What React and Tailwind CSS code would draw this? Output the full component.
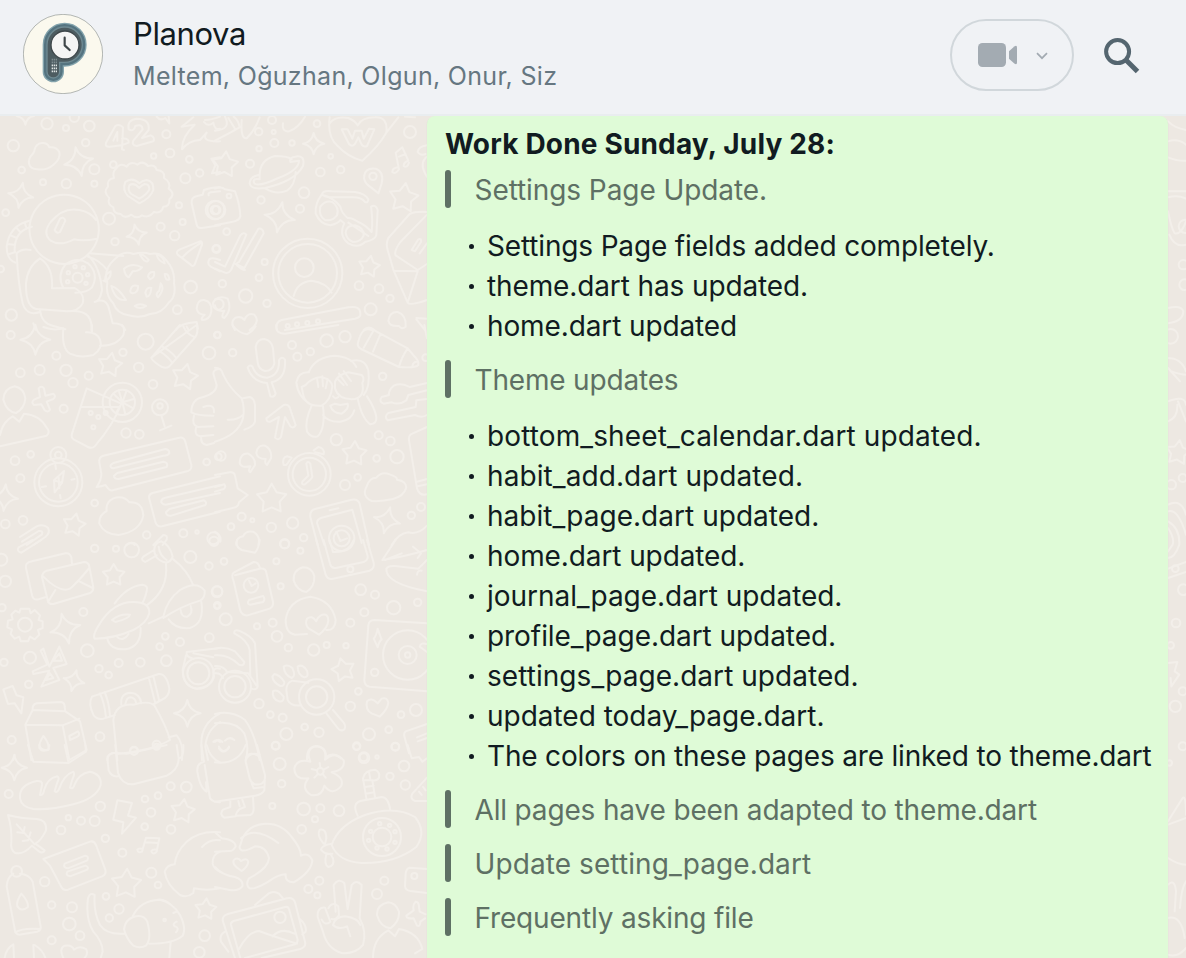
import React from "react";

/* ---------- Wallpaper doodles ----------
   Each tile is drawn in a 660-unit grid placed at (x, y) and scaled by 1/3.
   dots: [cx, cy, r]   stars: [cx, cy, r, rotation]   sparks: [cx, cy, r, rotation] */
const TILES = [
  {
    x: 0,
    y: 110,
    dots: [
      [141, 41, 17], [198, 54, 9], [268, 48, 16], [40, 107, 17], [257, 98, 11], [65, 180, 10], [129, 217, 9],
      [199, 221, 14], [283, 221, 9], [283, 178, 15], [340, 164, 10], [499, 73, 12], [510, 129, 13], [461, 138, 8],
      [568, 148, 10], [556, 205, 15], [599, 189, 11], [537, 286, 9], [548, 336, 9], [482, 350, 12], [524, 377, 14],
      [327, 326, 18], [345, 395, 11], [17, 308, 10], [572, 531, 19], [532, 599, 13], [34, 615, 17], [649, 416, 10],
      [2, 477, 10], [233, 503, 15], [205, 488, 5], [225, 470, 5], [250, 473, 5], [263, 494, 5], [258, 520, 5],
      [203, 515, 5], [645, 300, 28], [645, 300, 13], [223, 22, 14], [655, 583, 16],
    ],
    sparks: [[236, 155, 44, -12], [62, 256, 38, 10], [410, 374, 31, -12], [76, 18, 26, 0]],
    paths: [
      "M98 132C80 150 82 176 112 178C150 184 184 150 178 126C168 108 152 112 148 112C140 92 110 96 104 118Q104 126 98 132Z",
      "M372 120L366 118L369 52Q358 40 346 48L318 98Q314 112 330 110L364 106M340 92L352 66L352 92M364 106L386 98Q388 84 366 86",
      "M386 58Q380 30 410 26Q450 26 446 60L426 84L452 76Q466 82 460 94L410 108Q394 106 400 92L428 58Q426 40 406 48Q402 66 386 58Z",
      "M470 20Q480 34 496 24L508 40L506 18M580 22L545 50Q570 46 584 44Q545 80 546 118Q566 92 600 90L620 68Q600 96 660 94M615 30Q634 30 660 20M612 36Q624 52 640 38Q644 62 660 56M660 142L634 146L646 166L636 190L660 186",
      "M348 176Q362 156 380 170Q392 152 412 164Q428 150 444 168Q466 162 470 180Q496 182 492 204Q514 218 506 236Q528 252 508 268Q510 290 490 290Q484 312 462 306Q446 326 426 316Q410 328 394 314Q374 328 362 312Q340 312 340 292Q320 284 328 264Q308 246 324 230Q320 206 342 204Q336 186 348 176Z",
      "M418 220Q396 200 376 216Q366 240 384 258L418 280Q452 264 460 240Q462 214 440 210Q426 212 418 220Z",
      "M418 234Q402 216 388 226Q382 242 394 252L418 266Q442 252 448 238Q448 222 434 222Q424 226 418 234Z",
      "M192 254A104 104 0 1 0 193 254M292 386Q250 394 222 388Q180 410 152 392Q126 370 152 336Q190 290 238 300Q272 306 288 330M164 360L180 326Q192 318 196 332L180 366Q170 372 164 360Z",
      "M88 332Q28 346 20 410Q20 448 46 458M96 350Q42 362 44 424M74 338L80 356M50 354L62 368M32 376L50 384M22 402L42 404M28 432L46 426",
      "M50 430Q66 414 92 420M50 430Q54 520 68 580Q80 620 120 606M120 445Q160 470 156 535L224 534Q256 552 248 580Q236 604 200 604L120 598Q76 600 78 520Q82 470 120 445M120 600Q124 640 160 648L196 658M200 604Q280 594 274 660M264 436Q300 470 306 540Q300 574 284 576Q320 560 328 600L338 640Q370 640 376 660M268 430L370 438M264 440Q294 446 322 480M100 640L108 660",
      "M190 534Q170 496 196 464Q230 438 264 460Q298 492 276 532Q262 548 226 548M310 512L322 516",
      "M344 448Q370 420 400 432Q430 424 450 432Q482 426 498 450Q526 480 522 520Q530 560 506 578Q486 610 450 612Q420 626 386 616Q350 610 340 580Q316 556 322 520Q308 480 344 448Z",
      "M372 476Q396 456 426 472Q416 484 398 484L386 502Q374 496 372 476ZM334 528Q356 534 378 570Q346 574 334 528ZM404 588Q420 578 438 588Q420 600 404 588ZM482 520Q496 536 474 562Q464 552 478 542ZM420 434Q430 432 446 450Q438 464 420 434ZM470 432Q492 440 494 460Q472 452 470 432ZM332 484Q334 504 316 514Q312 492 332 484ZM392 538Q396 522 414 528Q416 548 398 550Q388 548 392 538ZM436 548Q440 530 454 534Q452 560 440 560ZM444 500Q446 484 462 486Q466 502 450 508ZM494 492Q506 490 508 508Q496 514 494 492Z",
      "M575 280Q572 262 592 258L608 254L612 240Q640 230 660 232M575 280L590 344Q592 356 606 354L660 346M626 256Q622 246 640 246L660 244",
      "M533 434Q526 424 540 418L600 394Q608 394 606 404L584 464Q578 472 572 464ZM546 444Q562 424 604 398M660 450Q636 440 628 448Q620 462 632 470L660 484",
      "M590 596Q592 568 612 570Q638 576 634 604Q630 630 606 630Q602 624 614 614Q594 614 590 596ZM528 660Q540 640 590 636L594 656M560 650L566 660",
    ],
  },
  {
    x: 215,
    y: 110,
    dots: [
      [171, 30, 12], [131, 65, 11], [176, 66, 6], [178, 99, 12], [231, 99, 8], [132, 116, 8], [306, 41, 10],
      [105, 161, 12], [316, 186, 13], [377, 179, 11], [347, 139, 7], [585, 66, 18], [267, 248, 16], [138, 270, 11],
      [255, 296, 12], [474, 199, 11], [35, 365, 10], [149, 456, 9], [132, 503, 10], [22, 521, 11], [92, 558, 20],
      [156, 580, 11], [268, 473, 28], [432, 527, 13], [492, 536, 13], [525, 565, 11], [467, 598, 18], [4, 417, 12],
      [4, 300, 27], [4, 300, 12], [42, 258, 7], [278, 490, 104], [278, 490, 88], [218, 648, 6], [246, 643, 6],
      [277, 639, 6], [309, 634, 6],
    ],
    stars: [[30, 164, 40, 5], [566, 264, 45, 8], [462, 470, 33, 10]],
    sparks: [[296, 101, 32, 0], [194, 322, 46, 10]],
    paths: [
      "M0 92Q60 60 74 52Q70 30 56 20M0 62Q50 58 30 20M40 24L60 56M80 30Q76 90 96 84Q120 60 134 22M204 40Q200 66 222 64Q250 54 270 20",
      "M344 22Q336 80 368 108Q400 142 442 152Q490 110 514 68L550 22M344 40Q360 18 400 24Q420 32 428 46Q440 22 480 22Q520 20 514 68",
      "M380 58L398 58L412 86L420 62L440 62L446 86L462 56L478 58L456 108Q446 112 440 104L430 82L420 102Q412 112 402 102Z",
      "M134 200Q132 150 180 138Q220 138 230 148M152 236Q184 256 216 242Q240 226 242 186M134 194Q104 200 104 220Q108 240 150 234Q240 214 264 168Q272 134 240 140Q222 142 226 156L252 152Q252 180 190 204Q130 232 118 220Q110 204 134 208Z",
      "M320 254Q324 240 350 244L420 246Q450 250 460 268Q460 280 450 276Q440 262 414 262L342 262Q330 260 320 254M320 254Q300 280 302 310Q314 342 346 346Q370 340 376 330Q386 338 388 340Q370 376 400 400Q430 416 450 396Q480 390 484 376L488 300Q482 282 468 290Q474 330 470 366Q450 344 430 336Q410 322 398 324Q380 310 376 290Q356 262 320 254Z",
      "M316 290Q330 270 352 276Q374 292 366 316Q352 334 330 330Q310 318 316 290ZM392 368Q394 346 420 346Q448 354 446 376Q438 396 414 396Q394 388 392 368ZM400 338L460 378",
      "M448 196Q452 172 482 176Q508 186 500 220L490 250Q476 238 460 226Q444 214 448 196Z",
      "M552 178L542 128L562 112L580 152M552 140L572 132M552 178Q542 194 532 186Q532 174 548 172M582 158Q576 176 566 168Q566 156 580 152",
      "M636 106Q610 110 608 126Q616 138 632 132M636 140Q610 160 636 200M570 20L600 22",
      "M0 236Q20 228 30 238L60 244Q74 280 76 318Q74 332 50 336L0 346",
      "M0 456L30 470L76 376Q86 364 94 374L48 480Q40 492 30 488L0 476M62 462L88 474L146 370Q144 354 130 356L72 456ZM66 466Q80 480 90 480",
      "M636 306Q600 304 584 312L520 384Q512 400 518 420L536 482L578 578Q584 588 636 570M636 314L556 396Q536 424 542 436L608 480L636 462M536 482L608 484L578 578M590 420L610 388Q620 384 618 396L600 424ZM614 430L636 400",
      "M236 558Q246 516 290 512Q334 518 350 548M186 660Q180 636 200 630L400 592Q436 586 436 610Q438 622 420 626L210 660",
      "M0 568Q20 556 38 566Q52 600 28 624Q16 622 28 602Q4 606 0 586M60 660Q44 636 60 624Q78 616 88 630Q98 606 118 614Q134 632 116 650L104 660",
      "M520 632Q524 604 548 606Q574 614 572 650Q560 660 552 648Q524 650 520 632ZM446 660Q462 646 478 660M604 624L636 626M604 628L630 660",
    ],
  },
  {
    x: 0,
    y: 325,
    dots: [
      [32, 30, 12], [169, 92, 12], [119, 135, 15], [61, 143, 13], [198, 136, 17], [219, 173, 14], [266, 152, 12],
      [369, 82, 11], [416, 127, 14], [437, 50, 24], [459, 178, 13], [627, 84, 19], [191, 251, 12], [272, 264, 6],
      [295, 276, 6], [317, 264, 6], [280, 307, 6], [378, 324, 14], [418, 328, 13], [480, 247, 24], [480, 243, 8],
      [45, 407, 13], [92, 388, 10], [61, 460, 12], [175, 390, 24], [175, 390, 10], [175, 472, 72], [175, 472, 58],
      [284, 534, 10], [16, 597, 13], [69, 586, 13], [440, 630, 11], [550, 625, 12], [620, 411, 10], [591, 621, 5],
      [640, 640, 18], [367, 232, 59], [367, 232, 38], [652, 30, 9], [655, 395, 10],
    ],
    stars: [[330, 120, 37, 10], [554, 156, 40, 12], [222, 600, 35, 12]],
    sparks: [[106, 44, 45, 0], [14, 518, 40, 5]],
    paths: [
      "M130 6Q160 18 190 10Q184 70 210 86Q240 100 280 90Q310 70 300 44Q290 20 258 22M300 62Q350 64 370 30Q376 10 366 0M276 0L276 20",
      "M454 98L540 0M590 0Q596 20 586 36L508 124Q494 134 476 120Q454 104 454 98ZM474 76Q500 90 516 112M486 64Q510 76 528 98M550 4Q560 28 584 36",
      "M44 184Q12 190 10 224Q20 260 48 264Q74 250 76 220Q72 190 44 184ZM0 364L140 332Q152 320 140 308Q120 270 72 266L58 290L38 274Q8 290 0 330",
      "M116 190Q124 180 132 190L136 212L160 206Q170 214 160 222L140 230L150 254Q144 264 134 256L124 238L102 240Q92 232 102 224L120 216Z",
      "M260 190L364 236Q340 300 284 364Q276 372 264 366L222 344Q212 338 216 326ZM242 246L356 246M367 232L340 206M367 232L356 196M367 232L380 196M367 232L402 222M367 232L400 250M367 232L376 268M367 232L348 264",
      "M484 272L494 304M480 316L514 302",
      "M660 132Q640 132 640 146L650 180Q650 204 610 216Q574 222 574 262Q590 272 640 272M610 246Q644 234 642 262M582 272Q574 300 594 306L640 304M588 308Q582 330 600 334L640 330M604 334Q600 356 620 360L642 354",
      "M162 466L192 438L186 474L164 502ZM164 466L186 474M176 458L178 490M166 420L168 432M182 520L180 510M126 486L138 484M224 462L214 464",
      "M310 392L538 338Q552 336 556 350L574 420Q576 434 564 438L344 494Q330 500 324 490L316 480Q304 484 290 486Q304 466 304 446L298 412Q296 396 310 392Z",
      "M340 414L496 372Q508 374 508 384Q504 392 490 392L340 430Q330 430 332 420ZM352 444L490 410Q506 412 500 426L356 462Q342 462 342 452Z",
      "M660 454L458 504Q444 508 448 522L466 590Q470 606 486 604L660 560M660 480L496 518Q482 522 484 532Q490 542 504 538L660 504M508 552L612 526Q622 532 616 540L514 572Q498 574 498 562Z",
      "M320 558Q296 570 298 596Q312 628 356 630Q420 620 430 572Q428 530 388 532Q370 510 340 520Q316 532 320 558Z",
      "M60 636L110 604Q130 596 144 608Q152 624 136 636L100 660M66 650L116 618Q130 616 126 628L80 660M460 660L490 630Q504 630 500 644L488 660M380 660Q394 650 404 660",
    ],
  },
  {
    x: 215,
    y: 325,
    dots: [
      [7, 30, 10], [53, 83, 11], [231, 60, 12], [247, 95, 12], [286, 80, 11], [335, 47, 19], [390, 35, 17],
      [503, 154, 11], [364, 344, 17], [18, 393, 14], [491, 331, 12], [526, 348, 13], [546, 395, 20], [485, 400, 10],
      [428, 457, 10], [390, 480, 15], [80, 575, 12], [112, 586, 6], [48, 605, 10], [169, 607, 14], [233, 594, 17],
      [266, 638, 11], [209, 656, 14], [589, 571, 11], [618, 546, 12], [283, 448, 64], [283, 448, 50], [380, 640, 38],
      [380, 640, 24], [632, 98, 10],
    ],
    stars: [[418, 386, 38, 3], [170, 522, 46, 0]],
    sparks: [[516, 586, 40, 14]],
    paths: [
      "M122 66Q126 42 148 42Q170 46 174 70L178 116Q172 138 150 138Q130 132 128 112ZM98 128Q102 118 112 124Q124 158 156 158Q194 152 192 106Q200 92 210 104Q214 162 170 172L182 206Q178 218 166 214L156 174Q112 170 98 128Z",
      "M0 128Q20 128 24 148Q44 190 80 220Q90 250 84 280Q70 330 0 350M84 220L104 216Q118 220 120 240L120 290Q114 306 88 314M84 270Q66 286 38 284",
      "M154 280L206 240Q220 236 224 248L242 300Q236 312 226 304L210 276L198 336Q190 348 180 338L192 276L166 290Q154 292 154 280Z",
      "M282 140Q300 96 360 92Q410 96 424 126M282 142Q250 140 244 172Q248 216 290 240M408 108Q450 98 460 136Q466 186 446 210M260 186L272 180Q290 158 320 156Q350 164 352 184Q348 226 320 242Q270 246 264 206ZM360 170Q370 148 400 142L440 150Q450 160 442 174Q450 214 420 222Q370 226 360 190ZM306 160L310 186M322 154L324 184M338 162L332 190M372 146L396 180M386 138L408 168M366 160L386 180",
      "M290 242Q268 290 276 320Q290 340 308 334Q332 310 324 244M428 220Q440 280 466 298Q486 296 484 276Q480 250 456 214M324 270Q340 292 376 290Q410 286 418 256M346 242L360 236L376 240L398 236Q404 250 380 266Q352 264 346 242ZM354 214Q360 224 370 216",
      "M466 14Q440 6 430 50Q424 64 438 72L552 126Q600 130 610 120Q612 108 600 96L578 70L478 16ZM476 16L446 68M496 28L474 80M578 70Q560 96 552 126M592 124Q594 110 606 110",
      "M636 174L584 186Q560 172 536 182Q520 196 522 210L500 216Q490 230 506 236L530 232Q552 242 574 226L580 210L636 196M636 222L604 226L602 246L520 264Q506 274 518 286L600 270Q620 280 636 270M636 306L592 326Q580 330 582 346L606 490Q614 514 636 508M606 470L636 462M608 484L636 478M628 0L636 40",
      "M74 412Q76 384 100 386Q122 400 120 420L106 442Q98 440 106 424Q76 430 74 412ZM124 384Q128 358 150 362Q172 374 168 400L156 420Q148 416 152 402Q126 402 124 384Z",
      "M274 416Q278 406 286 416L292 456Q290 462 270 478Q258 480 262 470L280 452ZM206 420Q200 398 216 394L230 398L214 420ZM296 376L310 366Q330 370 326 388L300 382",
      "M0 450L44 442Q58 440 60 452L68 490L98 510L72 532Q70 546 56 548L0 562M0 486L28 478Q34 486 26 492L0 500",
      "M456 482Q464 458 484 458Q500 438 524 448Q548 456 546 464Q574 468 574 488Q566 514 534 522Q500 530 470 528Q438 514 456 482Z",
      "M308 660L286 576Q284 556 300 552L410 524Q428 520 434 536L462 660M328 660L306 594Q306 582 320 578L412 554L440 654M344 556L370 550M364 620L376 648L396 640M530 660Q550 626 580 622Q610 630 636 602M64 660Q62 638 84 634Q92 616 114 620Q138 634 130 660",
      "M0 620Q20 630 16 650M52 0Q70 24 96 28Q112 20 122 4M184 0Q180 26 210 26L370 0",
    ],
  },
  {
    x: 0,
    y: 540,
    dots: [
      [284, 25, 11], [348, 26, 9], [395, 30, 22], [4, 59, 18], [16, 124, 17], [6, 203, 11], [75, 254, 21],
      [250, 216, 12], [262, 332, 19], [90, 353, 18], [12, 367, 11], [86, 433, 11], [297, 386, 11], [326, 405, 10],
      [356, 369, 12], [421, 367, 13], [499, 362, 16], [496, 289, 10], [479, 320, 10], [540, 306, 12], [571, 51, 18],
      [627, 78, 11], [628, 293, 13], [595, 400, 46], [595, 400, 33], [35, 600, 12], [300, 590, 13], [402, 632, 12],
      [470, 614, 12], [652, 154, 15], [652, 196, 10], [642, 4, 14],
    ],
    stars: [[341, 106, 34, 0]],
    sparks: [[196, 266, 46, -14], [222, 422, 32, 14], [562, 520, 40, 0]],
    paths: [
      "M98 0L56 22Q48 34 64 38L124 0",
      "M96 64L196 40Q210 38 214 52L216 70M96 64Q74 68 78 84L96 166Q100 182 116 178L136 172M140 92L252 66Q266 66 268 80L280 142Q280 156 268 160L160 192Q148 194 144 184L126 112Q126 98 140 92ZM130 110Q180 160 210 146Q230 130 268 84M144 186L166 150M278 144L238 124",
      "M62 206L88 206L92 220L104 210L120 226L116 240L128 244L128 264L114 270L118 284L104 298L90 290L84 304L62 304L58 290L44 296L32 282L36 268L22 262L24 242L38 238L34 224L46 212L58 218Z",
      "M130 326L148 380L178 320L200 372L160 384L178 420L124 440L148 392L100 402L98 394L142 374L122 332ZM160 362L178 340L186 362ZM150 400L160 414L138 420Z",
      "M10 448L38 438L50 466L70 472L64 520L44 490L24 492Z",
      "M98 510Q96 494 110 490L184 486Q194 488 194 500L196 514M98 510L196 514L240 544L260 630L208 660L188 556L76 554M98 510L76 554L94 660M188 556L238 536M130 588Q116 610 118 624Q128 640 146 626Q146 606 130 588ZM208 588L234 574Q242 584 232 590L210 600Z",
      "M284 296Q276 286 300 250Q340 186 400 186Q450 186 448 220Q440 250 400 270Q340 296 284 296ZM344 190Q380 140 426 134Q446 136 440 154Q434 180 426 190M336 240Q360 220 390 224Q388 236 346 246ZM322 296Q330 330 376 328Q424 320 422 264M352 292Q370 306 386 282",
      "M462 30L430 50Q420 60 436 66L470 46M464 40Q458 10 484 4Q510 14 518 50Q510 72 490 66Q470 60 464 40ZM476 20Q478 46 500 60M520 58Q562 90 580 136M498 72Q506 150 440 196M446 250L490 230Q500 180 540 150Q590 120 614 152Q616 174 600 182Q540 200 490 234M506 238Q526 268 570 264Q614 250 604 186M542 210Q544 232 562 230Q580 220 572 198",
      "M276 470L476 402Q500 400 508 446Q508 470 484 480L462 492M276 470Q264 490 280 524Q290 540 310 536L344 526M300 460Q314 490 318 532M314 456Q328 490 330 528M446 412L466 490M460 408L478 484M364 494Q360 460 392 458Q420 460 424 490M376 492Q380 472 392 472Q406 474 408 488",
      "M340 540Q346 490 400 494Q450 480 464 498Q500 560 510 600Q460 630 350 642L340 540M350 642L352 660M322 660Q326 634 350 640M506 592L530 586Q552 610 546 660",
      "M560 336L660 324M560 336Q556 350 580 356M580 340L640 352M558 346L548 390Q550 440 590 446Q636 440 642 410Q634 380 660 386M660 520Q604 550 604 610L606 660M660 546Q620 570 616 620L624 660M640 606Q648 596 660 606M44 644L40 660",
    ],
  },
  {
    x: 215,
    y: 540,
    dots: [
      [209, 12, 13], [256, 32, 9], [27, 64, 10], [184, 64, 9], [197, 139, 9], [6, 155, 16], [32, 238, 18],
      [173, 248, 12], [126, 259, 9], [186, 289, 16], [220, 323, 11], [296, 330, 17], [335, 315, 9], [393, 317, 8],
      [406, 248, 12], [448, 217, 12], [437, 149, 16], [480, 164, 12], [536, 203, 20], [608, 187, 11], [108, 136, 22],
      [406, 88, 9], [430, 454, 10], [406, 499, 14], [479, 397, 11], [578, 345, 74], [578, 345, 27], [578, 345, 8],
      [603, 510, 18], [558, 524, 10], [132, 491, 14], [166, 524, 10], [203, 533, 12], [269, 561, 10], [214, 582, 18],
      [312, 577, 14], [182, 617, 11], [462, 583, 18], [521, 569, 10], [541, 620, 12], [425, 620, 10], [305, 471, 53],
      [305, 471, 32], [60, 440, 48], [60, 440, 32], [446, 652, 12], [6, 198, 8],
    ],
    stars: [[385, 390, 36, -14]],
    paths: [
      "M66 0Q60 20 80 30L120 38Q132 24 134 0",
      "M56 98L116 66Q130 66 134 82M56 98Q48 104 56 124L76 212Q82 228 98 226L164 206Q176 200 174 186L154 98Q152 84 134 86L60 106M102 122L110 138L122 130M102 180L144 168Q152 178 144 186L106 194Q94 192 102 180Z",
      "M264 82Q234 90 236 122Q246 152 274 156Q300 140 298 108Q290 82 264 82ZM276 282L240 284Q212 280 212 240Q220 180 286 170Q350 180 362 240Q360 272 334 270M304 244Q290 224 276 236Q268 254 282 266L312 284Q338 264 340 242Q340 220 322 224Q308 230 304 244Z",
      "M304 0L332 104Q338 120 354 116L464 92Q480 84 476 68L456 0M326 0L346 74Q350 86 362 84L446 66Q460 60 458 48L444 0M344 0L354 36Q400 40 416 0",
      "M542 0L502 60Q560 52 636 30M510 60L560 40M514 86Q520 76 540 78L610 86L636 60M514 86Q510 130 636 154M594 20L618 40L608 54M606 104Q608 90 620 92",
      "M636 250L478 240Q462 240 460 256L448 420Q448 438 464 440L636 454M488 266Q496 290 500 298Q492 304 488 322Q480 304 476 296Q484 288 488 266ZM636 312Q618 306 614 320L636 336",
      "M58 280Q56 268 72 272Q110 288 120 310L128 440Q124 452 110 446M58 280Q98 300 104 330L106 410M0 326Q30 318 60 334L88 366Q86 380 72 374Q40 342 0 346M0 378Q26 376 36 396L100 400L124 436M0 400Q16 398 24 414",
      "M178 402Q196 406 208 426Q208 440 196 438Q174 428 172 410ZM206 380Q218 372 232 384Q244 408 230 414Q208 406 206 380ZM248 380Q262 370 276 392Q282 412 268 412Q248 404 248 380ZM174 454Q186 444 206 470Q208 486 192 484Q170 476 174 454ZM280 428L232 422Q214 428 214 450L218 480Q228 500 258 496",
      "M334 520L368 564Q376 576 388 568Q394 560 386 548L354 510",
      "M488 490Q468 470 456 484Q450 510 470 520L494 530Q518 508 520 488Q516 470 500 476Z",
      "M0 522Q50 510 90 540Q120 580 134 660M0 550Q60 540 88 580Q104 620 92 660M0 606Q10 592 22 606M30 602Q44 588 58 600M12 620Q26 646 42 620M92 660Q104 634 134 644",
      "M276 660Q274 620 304 618Q336 622 332 652Q356 634 378 656M636 552L572 574Q564 580 570 596L582 640M606 592L636 580M608 604L636 594",
    ],
  },
  {
    x: 0,
    y: 745,
    dots: [
      [26, 147, 12], [301, 184, 14], [284, 228, 15], [243, 227, 12], [205, 218, 8], [183, 255, 13], [316, 280, 11],
      [367, 323, 12], [435, 162, 10], [474, 152, 10], [512, 124, 12], [559, 126, 16], [453, 202, 13], [434, 245, 10],
      [513, 253, 13], [134, 410, 14], [155, 480, 11], [216, 487, 15], [318, 454, 10], [357, 492, 14], [328, 519, 11],
      [208, 537, 19], [240, 572, 13], [155, 586, 12], [454, 383, 15], [474, 420, 10], [614, 572, 16], [598, 622, 16],
      [494, 525, 4], [50, 379, 16], [402, 18, 11], [470, 5, 9],
    ],
    stars: [[548, 199, 37, 8], [379, 417, 46, 3], [617, 493, 33, 5]],
    sparks: [[43, 68, 38, 0]],
    paths: [
      "M84 0L100 50L206 54L258 20L256 0M194 0L206 54M118 0Q124 20 146 14L148 0",
      "M346 0L354 84Q366 120 400 118L500 92Q536 74 536 40L530 0M350 22Q322 26 322 40L326 76Q334 96 354 94M346 24L380 26L436 14L500 0M536 40Q552 40 550 0",
      "M60 160Q56 120 110 108Q128 106 126 120L120 150Q130 152 132 136Q142 100 172 94Q180 98 172 112L164 138Q172 146 178 130Q192 90 220 80Q226 86 216 106L210 128Q220 134 224 118Q236 86 270 80Q306 88 302 120Q290 160 220 178Q150 196 100 192Q64 186 60 160Z",
      "M352 166L396 174L384 212L408 218L366 266L370 232L340 224Z",
      "M24 210Q60 220 110 222Q142 226 138 256Q124 286 106 296L134 316Q130 326 118 320L96 302Q70 330 46 324Q30 316 34 290Q36 250 24 210ZM50 238L104 298M52 262L70 264L74 246M68 288L84 286L92 262",
      "M130 342L270 290Q282 286 288 300L316 374Q320 388 306 394L204 434Q190 438 184 426L150 362ZM194 356L256 332Q268 334 262 346L204 370Q188 368 194 356ZM202 380L256 362Q268 366 262 374L210 394Q196 392 202 380Z",
      "M426 320L438 278L478 280L470 320M436 292L474 294M426 320Q414 326 412 314Q416 308 428 312M468 322Q456 330 454 318Q458 312 470 314",
      "M40 386Q22 396 20 424L46 562Q52 572 66 568L112 560Q124 556 122 544L98 410Q88 388 60 386M46 562Q66 548 122 552M64 446Q48 470 52 484Q64 502 84 486Q86 470 64 446Z",
      "M606 306Q630 280 660 286M660 262Q600 256 560 290Q528 320 524 358Q500 360 494 380Q500 420 540 450Q560 460 580 444L582 430Q620 438 660 430M660 320Q636 330 638 356Q640 370 660 380",
      "M284 450Q270 440 264 460Q256 520 280 560Q308 590 308 620L302 639M284 450Q280 500 300 540Q320 570 372 566M372 552Q376 524 400 516Q430 506 442 530Q456 580 438 602Q420 612 400 602Q378 580 372 552ZM398 514Q420 466 480 464Q520 474 540 510Q560 550 548 572Q520 596 448 596M466 466Q490 456 516 482M530 530Q516 536 524 544Q540 548 528 562M520 504L530 500M512 590L508 639",
      "M14 639Q18 610 40 598L42 639M100 600L102 639M104 600Q130 616 136 639M190 639Q176 610 194 602Q216 598 222 614Q238 600 258 612Q266 626 254 639",
      "M604 0L612 50Q590 54 592 80Q600 130 620 140L618 112M614 60L630 160Q640 172 660 172M620 0Q630 40 660 52",
    ],
  },
  {
    x: 215,
    y: 745,
    dots: [
      [182, 2, 12], [194, 57, 18], [200, 116, 11], [172, 183, 9], [266, 192, 19], [316, 190, 12], [372, 197, 16],
      [300, 223, 9], [260, 253, 13], [447, 38, 16], [486, 36, 5], [525, 94, 11], [567, 63, 16], [571, 120, 14],
      [541, 5, 11], [425, 3, 11], [316, 79, 10], [501, 276, 57], [501, 276, 28], [461, 286, 5], [467, 259, 5],
      [494, 236, 5], [524, 241, 5], [540, 260, 5], [540, 292, 5], [516, 312, 5], [486, 309, 5], [313, 407, 12],
      [280, 432, 12], [307, 451, 9], [508, 407, 12], [486, 447, 15], [195, 517, 17], [598, 393, 9],
    ],
    paths: [
      "M0 52Q70 60 92 0M12 10Q26 30 42 8M110 26Q92 26 92 50L104 100Q112 126 140 116Q152 108 150 90L136 40Q128 26 110 26ZM126 0L150 90L148 136Q140 150 120 152L0 170M110 116L116 130L148 126M46 168L46 186L24 194Q12 208 28 218L62 214Q64 200 74 192L90 186L82 164M64 212L106 210Q116 206 116 190L114 156M70 168L74 184",
      "M286 50Q270 10 304 4Q338 8 330 44Q362 16 386 46Q392 74 350 82Q390 98 378 124Q350 154 328 122Q320 156 288 150Q256 130 280 100Q240 106 238 70Q246 40 286 50ZM316 68L314 54M326 74L340 66M324 88L332 98M308 88L298 98M304 76L290 72",
      "M350 300Q370 240 450 210Q540 180 600 216Q636 260 604 306Q540 356 440 354Q370 350 350 300ZM428 212Q410 176 436 168L500 156Q520 156 526 196M454 160L444 100Q448 76 480 74Q496 82 492 98Q488 108 472 106L480 156M444 106L470 106M450 126L476 122M452 146L478 142M462 80L466 104M350 296Q320 300 318 314Q330 330 352 326M326 296Q304 270 314 254Q334 250 334 280L330 298M334 328Q326 360 340 366Q360 362 354 340L346 326",
      "M0 262L20 280Q60 284 62 304Q54 320 40 318L0 320M0 366Q20 390 60 396Q86 404 82 424Q70 440 40 434L0 426M76 300Q90 240 150 236Q200 234 230 276Q258 310 258 332Q280 320 292 346Q290 380 236 412Q210 412 212 388Q190 388 160 410Q120 434 104 430Q90 420 102 400Q160 370 162 340Q154 304 120 304Q90 320 80 316Q70 310 76 300ZM78 280Q120 240 190 294M78 348Q66 334 56 346Q52 358 66 368L80 378Q98 366 100 350Q96 336 78 348Z",
      "M60 639L24 530Q20 514 36 508L216 460Q234 456 240 472L270 590Q274 606 256 612L140 639M76 639L48 540Q46 532 56 528L210 486Q220 484 222 492L248 584Q248 594 240 598L90 639M72 612Q100 560 132 558Q180 576 246 596M172 574Q200 546 238 566M120 480L160 446Q176 436 192 446L204 460M252 520Q276 540 272 560L262 568M30 560Q12 570 18 590L40 620",
      "M362 500L356 420Q370 398 388 414L398 492L410 420Q424 402 440 420L434 520Q456 560 444 600Q420 628 380 624Q336 610 324 560L308 516Q306 486 330 488L346 530Q330 544 320 524M340 490Q350 468 370 484L372 510Q364 526 350 522M354 540Q360 516 390 514Q430 520 436 540M354 540Q370 556 396 544L406 574",
      "M520 472Q484 480 486 510Q496 546 526 550Q554 530 552 500Q542 474 520 472ZM474 639Q474 580 520 556L540 574L552 552Q610 562 622 612L600 625M602 470Q612 470 612 486L614 500L632 508M602 470Q592 480 596 496L574 512Q574 522 596 520L606 542Q616 546 616 530L630 520M636 372L584 368Q574 370 572 386L570 424Q572 436 586 438L636 444M636 98L592 146Q584 162 600 168L636 168M612 140L620 150M624 126L632 136M578 0L590 40L612 36L622 50L636 40",
    ],
  },
  {
    x: 1168,
    y: 108,
    dots: [
      [8, 685, 22], [46, 470, 14], [50, 530, 16], [44, 1110, 12], [10, 1130, 14], [46, 1445, 16], [24, 1545, 13],
      [8, 1612, 10], [22, 1795, 17], [44, 1750, 12], [44, 1915, 12], [4, 1965, 8], [22, 1382, 10], [52, 355, 20],
    ],
    stars: [[30, 1034, 38, 8]],
    paths: [
      "M0 40Q20 60 54 66M0 100Q30 90 54 110M0 148Q30 160 54 158M0 250L54 250M0 268Q30 260 54 272M0 310Q10 360 20 376Q40 380 54 340M4 380Q20 420 54 410M0 600Q40 590 46 610Q46 640 0 646M0 750Q40 750 54 790M0 780L36 820M10 790Q40 800 54 800M0 880Q50 860 54 890M30 880L54 940M0 940Q30 930 28 890",
      "M0 1190Q40 1170 54 1220M0 1210Q30 1200 54 1280M0 1240Q36 1260 34 1310Q20 1350 0 1350M0 1260Q20 1290 14 1310L0 1330M0 1382L54 1362M0 1410L54 1392M0 1665L28 1662L20 1690L34 1700L10 1735L8 1710",
      "M0 2140L44 2070Q54 2060 54 2120M0 2150L54 2130M0 2250Q30 2270 54 2270M0 2330Q20 2310 24 2350L20 2410M54 2320Q40 2340 36 2400M0 2430Q40 2420 50 2490M0 2540Q30 2550 54 2520",
    ],
  },
];

const starPath = (cx, cy, r, rot) => {
  const pts = Array.from({ length: 10 }, (_, i) => {
    const a = ((i * 36 - 90 + rot) * Math.PI) / 180;
    const k = i % 2 ? r * 0.55 : r;
    return `${(cx + k * Math.cos(a)).toFixed(1)} ${(cy + k * Math.sin(a)).toFixed(1)}`;
  });
  return `M${pts.join("L")}Z`;
};

const sparkPath = (r) => {
  const k = r * 0.2;
  return `M0 ${-r}Q${k * 0.6} ${-k} ${r} 0Q${k} ${k * 0.6} 0 ${r}Q${-k * 0.6} ${k} ${-r} 0Q${-k} ${-k * 0.6} 0 ${-r}Z`;
};

function Wallpaper() {
  return (
    <svg
      aria-hidden="true"
      viewBox="0 116 1186 842"
      className="col-start-1 row-start-1 h-[842px] w-[1186px]"
      fill="none"
      stroke="#f3efea"
      strokeWidth="6"
      strokeLinecap="round"
      strokeLinejoin="round"
    >
      {TILES.map((t) => (
        <g key={`${t.x}-${t.y}`} transform={`translate(${t.x} ${t.y}) scale(0.33333)`}>
          {t.dots.map(([x, y, r], i) => (
            <circle key={i} cx={x} cy={y} r={r} />
          ))}
          {(t.stars || []).map(([x, y, r, rot], i) => (
            <path key={i} d={starPath(x, y, r, rot)} />
          ))}
          {(t.sparks || []).map(([x, y, r, rot], i) => (
            <path key={i} d={sparkPath(r)} transform={`translate(${x} ${y}) rotate(${rot})`} />
          ))}
          {t.paths.map((d, i) => (
            <path key={i} d={d} />
          ))}
        </g>
      ))}
    </svg>
  );
}

function Avatar() {
  return (
    <svg viewBox="0 0 240 240" className="size-20 shrink-0" fill="none" strokeLinejoin="round">
      <circle cx="120" cy="120" r="119" fill="#fbf9ee" stroke="#8f9593" strokeWidth="2" />
      <g strokeLinecap="round">
        <path d="M91 173V92A34 34 0 1 1 125 126H91" stroke="#83a3ac" strokeWidth="64" />
        <path d="M91 173V92A34 34 0 1 1 125 126H91" stroke="#557480" strokeWidth="56" />
        <path d="M91 173V92A34 34 0 1 1 125 126H91" stroke="#6f8a92" strokeWidth="42" />
        <path d="M91 173V92A34 34 0 1 1 125 126H91" stroke="#4d5c61" strokeWidth="34" />
      </g>
      <circle cx="126" cy="93" r="42" fill="#f5f5f5" stroke="#3d464a" strokeWidth="4" />
      <path d="M125 71V94L140 108" stroke="#3f4649" strokeWidth="6.5" strokeLinecap="round" />
      <g stroke="#dfe4e4" strokeWidth="5">
        <path d="M86 137H102M86 145H102" stroke="#7d8b90" strokeDasharray="4 2" />
        <path d="M86 154H102M86 163H102M86 172H102" strokeDasharray="4 2" />
      </g>
    </svg>
  );
}

function Header() {
  return (
    <header className="flex h-[116px] shrink-0 border-b-2 border-[#e9edef] bg-[#f0f2f5] pl-[23px] pt-3.5">
      <Avatar />
      <div className="ml-[30px] flex-1 whitespace-nowrap">
        <h1 className="text-[31px] leading-10 tracking-[-0.4px] text-[#111b21]">Planova</h1>
        <p className="mt-1 text-[25px] leading-9 tracking-[0.31px] text-[#667781]">
          Meltem, Oğuzhan, Olgun, Onur, Siz
        </p>
      </div>
      <button className="mr-7 mt-[5px] flex h-[72px] w-[124px] items-center rounded-full border-2 border-[#d1d7db] pl-[26px]">
        <svg viewBox="0 0 40 26" className="h-[26px] w-10" fill="#a3abb2">
          <rect x="0" y="1" width="28" height="24" rx="4.5" />
          <path d="M31 9.3L36.3 4.4Q39 2.6 39 5.4V20.6Q39 23.4 36.3 21.6L31 16.7Z" />
        </svg>
        <svg viewBox="0 0 12 8" className="ml-[18px] mt-px h-2 w-3" fill="none" stroke="#a3abb2" strokeWidth="1.7">
          <path d="M1 1.2L6 6.2L11 1.2" />
        </svg>
      </button>
      <button className="mr-[45px] mt-[23px] size-[39px]">
        <svg viewBox="0 0 39 39" className="size-[39px]" fill="none" stroke="#54656f">
          <circle cx="15.6" cy="14.6" r="11.5" strokeWidth="4" />
          <path d="M24 23L35.5 34.5" strokeWidth="5" />
        </svg>
      </button>
    </header>
  );
}

function Quote({ className, children }) {
  return (
    <blockquote className="flex h-[38px] items-center">
      <span className="mr-[23.5px] h-[38px] w-1.5 rounded-sm bg-[#5e7064]" />
      <span className={`pt-0.5 text-[#5e7064] ${className}`}>{children}</span>
    </blockquote>
  );
}

function Bullets({ items }) {
  return (
    <ul className="mb-3.5 mt-[18px] leading-10">
      {items.map(([text, tracking]) => (
        <li key={text} className={`flex items-center pl-6 ${tracking}`}>
          <span className="mr-[13px] size-[5px] rounded-full bg-[#111b21]" />
          {text}
        </li>
      ))}
    </ul>
  );
}

const SETTINGS_ITEMS = [
  ["Settings Page fields added completely.", "tracking-[-0.16px]"],
  ["theme.dart has updated.", "tracking-[-0.12px]"],
  ["home.dart updated", "tracking-[-0.12px]"],
];

const THEME_ITEMS = [
  ["bottom_sheet_calendar.dart updated.", "tracking-[0.12px]"],
  ["habit_add.dart updated.", "tracking-[0.09px]"],
  ["habit_page.dart updated.", "tracking-[0.03px]"],
  ["home.dart updated.", "tracking-[-0.1px]"],
  ["journal_page.dart updated.", "tracking-[-0.04px]"],
  ["profile_page.dart updated.", "tracking-[-0.06px]"],
  ["settings_page.dart updated.", "tracking-[0.05px]"],
  ["updated today_page.dart.", "tracking-[-0.02px]"],
  ["The colors on these pages are linked to theme.dart", "tracking-[-0.18px]"],
];

function Message() {
  return (
    <article className="col-start-1 row-start-1 ml-[427px] w-[741px] whitespace-nowrap rounded-t-lg bg-[#dffbd7] pl-[18px] pt-2 text-[28px] text-[#111b21] shadow-[0_1px_1px_rgba(11,20,26,0.13)]">
      <p className="mb-1.5 text-[28px] font-bold leading-10 tracking-[0.17px]">Work Done Sunday, July 28:</p>
      <Quote className="tracking-[-0.08px]">Settings Page Update.</Quote>
      <Bullets items={SETTINGS_ITEMS} />
      <Quote className="tracking-[-0.18px]">Theme updates</Quote>
      <Bullets items={THEME_ITEMS} />
      <div className="flex flex-col gap-4">
        <Quote className="tracking-[-0.16px]">All pages have been adapted to theme.dart</Quote>
        <Quote className="tracking-[0.09px]">Update setting_page.dart</Quote>
        <Quote className="tracking-[-0.17px]">Frequently asking file</Quote>
      </div>
    </article>
  );
}

export default function App() {
  return (
    <div className="flex h-[958px] w-[1186px] flex-col overflow-hidden font-['Inter','Noto_Sans',sans-serif]">
      <Header />
      <main className="grid h-[842px] overflow-hidden bg-[#ede8e2]">
        <Wallpaper />
        <Message />
      </main>
    </div>
  );
}
